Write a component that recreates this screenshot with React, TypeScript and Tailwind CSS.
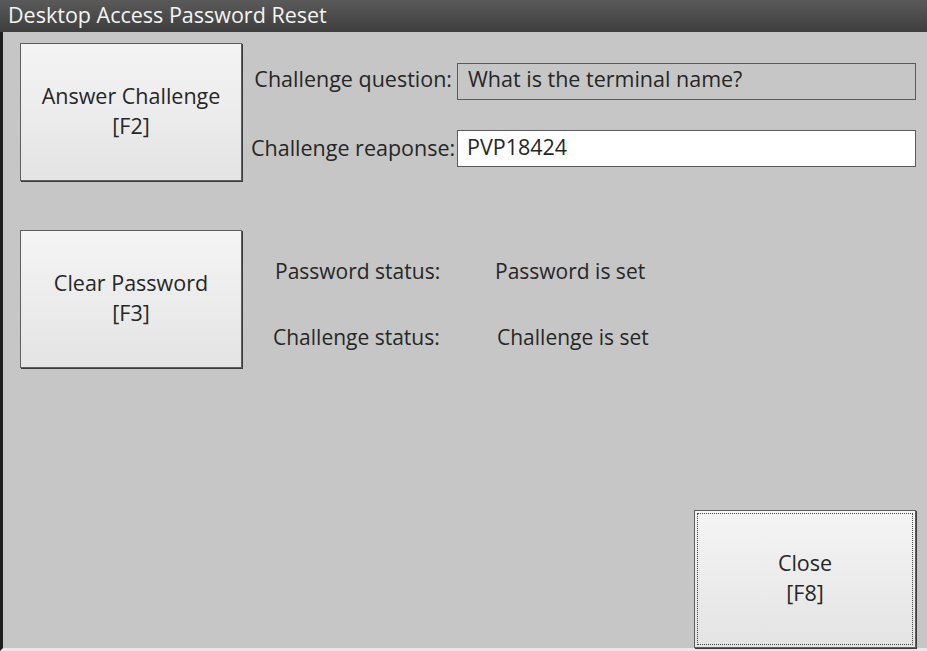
import React from "react";

const font = { fontFamily: '"Open Sans", "Noto Sans", sans-serif' };

function KeyButton({ label, fkey, focused = false }: { label: string; fkey: string; focused?: boolean }) {
  return (
    <button
      className="w-[222px] h-[138px] border border-[#5e5e5e] bg-gradient-to-b from-[#f4f4f4] to-[#e4e4e4] shadow-[1px_1px_0_#3c3c3c] p-[2px] text-[#262626] text-[21.5px] leading-[30px]"
    >
      <div
        className={`w-full h-full flex flex-col items-center justify-center pb-[2px] ${
          focused ? "border border-dotted border-[#444]" : ""
        }`}
      >
        <span>{label}</span>
        <span>{fkey}</span>
      </div>
    </button>
  );
}

export default function App() {
  return (
    <div className="w-[927px] h-[651px] bg-[#c6c6c6] flex flex-col overflow-hidden" style={font}>
      <div className="h-[32px] shrink-0 bg-gradient-to-b from-[#5a5a5a] to-[#3e3e3e] flex items-center pl-[8px] pb-[2px] text-[#f4f4f4] text-[21.5px]">
        Desktop Access Password Reset
      </div>
      <div className="flex-1 flex flex-col border-l-[3px] border-[#1e1e1e] border-b-[3px] border-b-[#e8e8e8] pl-[17px] pr-[11px] pt-[11px]">
        <div className="flex gap-[9px]">
          <KeyButton label="Answer Challenge" fkey="[F2]" />
          <div className="flex-1 flex flex-col gap-[30px] pt-[20px] text-[21.5px] text-[#262626]">
            <div className="flex items-center gap-[5px]">
              <span className="w-[201px] text-right whitespace-nowrap pb-[4px]">Challenge question:</span>
              <div className="flex-1 h-[37px] border border-[#5a5a5a] bg-[#c6c6c6] flex items-center px-[10px] pb-[4px]">
                What is the terminal name?
              </div>
            </div>
            <div className="flex items-center gap-[5px]">
              <span className="w-[201px] text-right whitespace-nowrap">Challenge reaponse:</span>
              <div className="flex-1 h-[37px] border border-[#5a5a5a] bg-white flex items-center px-[9px] pb-[2px]">
                PVP18424
              </div>
            </div>
          </div>
        </div>
        <div className="flex gap-[30px] mt-[49px]">
          <KeyButton label="Clear Password" fkey="[F3]" />
          <div className="flex flex-col gap-[34px] pt-[26px] text-[21px] text-[#262626]">
            <div className="flex">
              <span className="w-[223px] pl-[3px]">Password status:</span>
              <span>Password is set</span>
            </div>
            <div className="flex">
              <span className="w-[225px] pl-[1px]">Challenge status:</span>
              <span>Challenge is set</span>
            </div>
          </div>
        </div>
        <div className="flex-1" />
        <div className="flex justify-end">
          <KeyButton label="Close" fkey="[F8]" focused />
        </div>
      </div>
    </div>
  );
}
